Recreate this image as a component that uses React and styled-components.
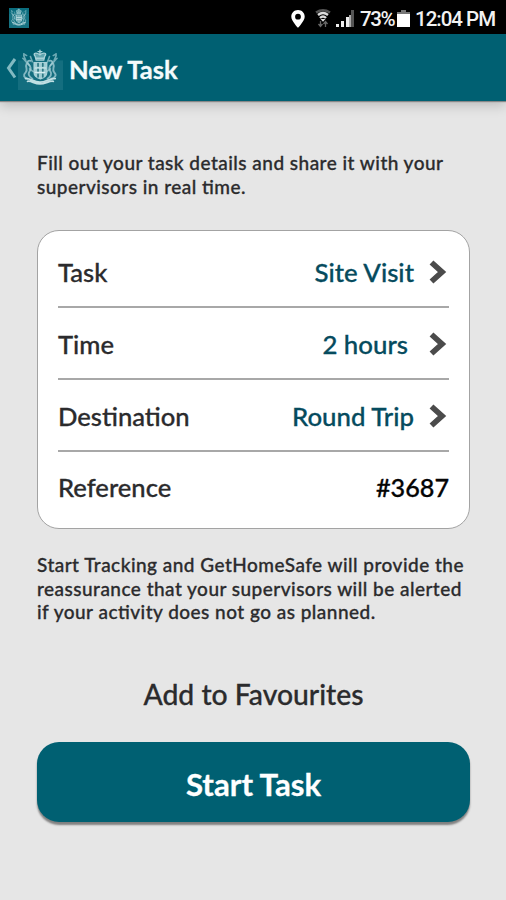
import React from 'react';
import styled, { createGlobalStyle } from 'styled-components';

const Global = createGlobalStyle`
  body { margin: 0; background: #e6e6e6; }
  * { box-sizing: border-box; }
`;

const Screen = styled.div`
  width: 506px;
  height: 900px;
  overflow: hidden;
  display: flex;
  flex-direction: column;
  background: #e6e6e6;
  color: #2b2b2d;
  font-family: Lato, sans-serif;
  font-weight: 500;
  -webkit-text-stroke: 0.3px currentColor;
`;

const StatusBar = styled.header`
  height: 34px;
  flex: none;
  display: flex;
  align-items: center;
  padding: 3px 11px 0 9px;
  background: #000;
  color: #f2f2f2;
  -webkit-text-stroke: 0;
`;

const StatusIcons = styled.div`
  display: flex;
  align-items: center;
  margin-left: auto;
`;

const StatusText = styled.span`
  width: ${(p) => p.$width}px;
  font: 500 ${(p) => p.$size}px/22px Roboto, sans-serif;
  letter-spacing: ${(p) => p.$spacing}px;
  white-space: nowrap;
`;

const Icon = styled.svg`
  display: block;
  flex: none;
  margin-right: ${(p) => p.$gap || 0}px;
`;

const TitleBar = styled.div`
  height: 67px;
  flex: none;
  display: flex;
  align-items: center;
  padding: 2px 0 0 6px;
  background: #006072;
  box-shadow: 0 1px 1px #888, 0 4px 12px rgba(0, 0, 0, 0.2);
`;

const Title = styled.h1`
  margin: 0 0 0 6px;
  color: #f4fbfc;
  font-size: 25.6px;
  line-height: 32px;
  font-weight: 700;
`;

const Content = styled.main`
  display: flex;
  flex-direction: column;
  padding: 50px 36px 0 37px;
`;

const Note = styled.p`
  margin: 0;
  font-size: 19px;
  letter-spacing: 0.47px;
  font-feature-settings: "liga" 1;
  line-height: 23.6px;
  white-space: nowrap;
`;

const Card = styled.section`
  height: 299px;
  margin: 32px 0 24px;
  padding: 5px 20px 0;
  border: 1.5px solid #a3a3a3;
  border-radius: 22px;
  background: #fff;
`;

const Row = styled.div`
  height: 72px;
  display: flex;
  align-items: center;
  padding-top: 1px;
  font-size: 25.8px;
  line-height: 32px;
  border-bottom: 2px solid #a8a8a8;
  &:last-child { border-bottom: 0; padding-top: 0; height: 70px; }
`;

const Label = styled.span`
  margin-right: auto;
  font-size: 25.6px;
`;

const Value = styled.span`
  color: ${(p) => (p.$plain ? '#050505' : '#064b5e')};
  font-size: ${(p) => (p.$plain ? 25.2 : 25.8)}px;
  margin-right: ${(p) => p.$gap || 0}px;
`;

const LinkButton = styled.button`
  height: 36px;
  margin: 52px 0 0;
  padding: 0;
  border: 0;
  background: none;
  color: inherit;
  font: inherit;
  font-size: 28.3px;
  line-height: 36px;
`;

const PrimaryButton = styled.button`
  height: 80px;
  margin-top: 30px;
  padding: 5px 0 0;
  border: 0;
  border-radius: 22px;
  background: #006072;
  box-shadow: 0 3px 2px #808080;
  color: #fff;
  font: 700 31.2px/40px Lato, sans-serif;
`;

function Crest({ width, height, gap }) {
  return (
    <Icon width={width} height={height} $gap={gap} viewBox="0 0 44 44" preserveAspectRatio="none" fill="none" stroke="#a9d2d8" strokeLinecap="round">
      <rect y="13" width="44" height="31" fill="#1f7786" stroke="none" opacity=".65" />
      <g transform="translate(1 .5) scale(.93)">
        <path d="M17 9c-3-4 1-5 5-2 4-3 8-2 5 2l-1 4h-8z" fill="#5fa5af" strokeWidth="1.400" />
        <path d="M22 2v5M20 3.500h4M18 11h8" strokeWidth="1.500" />
        <path d="M16 16h13v11c0 4-3 6-6.500 7-3.500-1-6.500-3-6.500-7z" fill="#9fcdd3" strokeWidth="1.700" />
        <path d="M20 17v15M25 17v15" stroke="#2c7985" strokeWidth="1.800" strokeDasharray="3 3" />
        <path d="M17 22h11M17 27h10" stroke="#d6edf0" strokeWidth="1.300" />
        <path d="M12 14c-3-1-4 2-2 4s3 5 1 8 0 6 3 8M8 17c-2 4 2 7-1 10s-2 6 2 7M32 14c3-1 4 2 2 4s-3 5-1 8 0 6-3 8M36 17c2 4-2 7 1 10s1 6-3 7" strokeWidth="2" opacity=".75" />
        <path d="M5 6c-1 4 3 5 2 9M5 6l3 2M4 11l7 8M39 6c1 4-3 5-2 9M39 6l-3 2M40 11l-7 8M12 9l2 6M32 9l-2 6M11 23l4 3M33 23l-4 3" strokeWidth="1.700" opacity=".65" />
        <path d="M7 34c5-1 8 4 15 4s10-5 16-4M9 37c4-1 7 3 13 3s10-4 14-3" stroke="#c2e0e4" strokeWidth="2" />
      </g>
    </Icon>
  );
}

const AppBadge = styled.div`
  display: flex;
  width: 20px;
  height: 20px;
  margin-top: -1px;
  background: #0b6d7e;
`;

function Chevron() {
  return (
    <Icon width="18" height="26" viewBox="0 0 18 26" $gap={2}>
      <path d="M2.500 3.500l10.500 9.500L2.500 22.500" fill="none" stroke="#4b4b4b" strokeWidth="5.700" />
    </Icon>
  );
}

const rows = [
  { label: 'Task', value: 'Site Visit', gap: 15 },
  { label: 'Time', value: '2 hours', gap: 21 },
  { label: 'Destination', value: 'Round Trip', gap: 15 },
];

export default function App() {
  return (
    <Screen>
      <Global />
      <StatusBar>
        <AppBadge><Crest width={20} height={20} /></AppBadge>
        <StatusIcons>
          <Icon width="14" height="18" viewBox="0 0 14 18" $gap={10}>
            <path fillRule="evenodd" d="M7 0C3.100 0 .3 2.900.3 6.700.3 11 7 17.700 7 17.700S13.700 11 13.700 6.700C13.700 2.900 10.900 0 7 0zm0 3.800a2.900 2.900 0 1 1 0 5.800 2.900 2.900 0 0 1 0-5.800z" fill="#fff" />
          </Icon>
          <Icon width="16" height="19" viewBox="0 0 16 19" $gap={5} fill="none">
            <path d="M1 3.500Q8-1 15 3.500" stroke="#555" strokeWidth="2.400" />
            <path d="M3 6q5-4 10 0M5 9q3-3 6 0" stroke="#ddd" strokeWidth="2.400" />
            <path d="M5.500 10h5L8 12.800z" fill="#ddd" />
            <path d="M5.500 12v5M3.500 15l2 2.500 2-2.500M10.500 18v-5M8.500 15l2-2.500 2 2.500" stroke="#686868" strokeWidth="1.300" />
          </Icon>
          <Icon width="19" height="17" viewBox="0 0 19 17" $gap={5}>
            <path d="M0 14h3v3H0zM5 11h3v6H5zM10 7h3v10h-3z" fill="#eee" />
            <path d="M15 0h3v17h-3z" fill="#555" />
            <path d="M13 5h2v12h-2z" fill="#aaa" />
          </Icon>
          <StatusText $width={37} $size={20.5} $spacing={-1.4}>73%</StatusText>
          <Icon width="13" height="18" viewBox="0 0 13 18" $gap={5}>
            <path d="M4 0h5v2h4v3H0V2h4z" fill="#777" />
            <path d="M0 4h13v13H0z" fill="#fff" />
          </Icon>
          <StatusText $width={80} $size={20.5} $spacing={-1}>12:04 PM</StatusText>
        </StatusIcons>
      </StatusBar>
      <TitleBar>
        <Icon width="11" height="24" viewBox="0 0 11 24" $gap={1}>
          <path d="M9 2L2.500 11l6.500 9.500" fill="none" stroke="#82b9c1" strokeWidth="3" />
        </Icon>
        <Crest width={45} height={42} />
        <Title>New Task</Title>
      </TitleBar>
      <Content>
        <Note>Fill out your task details and share it with your<br />supervisors in real time.</Note>
        <Card>
          {rows.map((r) => (
            <Row key={r.label}>
              <Label>{r.label}</Label>
              <Value $gap={r.gap}>{r.value}</Value>
              <Chevron />
            </Row>
          ))}
          <Row>
            <Label>Reference</Label>
            <Value $plain>#3687</Value>
          </Row>
        </Card>
        <Note>Start Tracking and GetHomeSafe will provide the<br />reassurance that your supervisors will be alerted<br />if your activity does not go as planned.</Note>
        <LinkButton>Add to Favourites</LinkButton>
        <PrimaryButton>Start Task</PrimaryButton>
      </Content>
    </Screen>
  );
}
